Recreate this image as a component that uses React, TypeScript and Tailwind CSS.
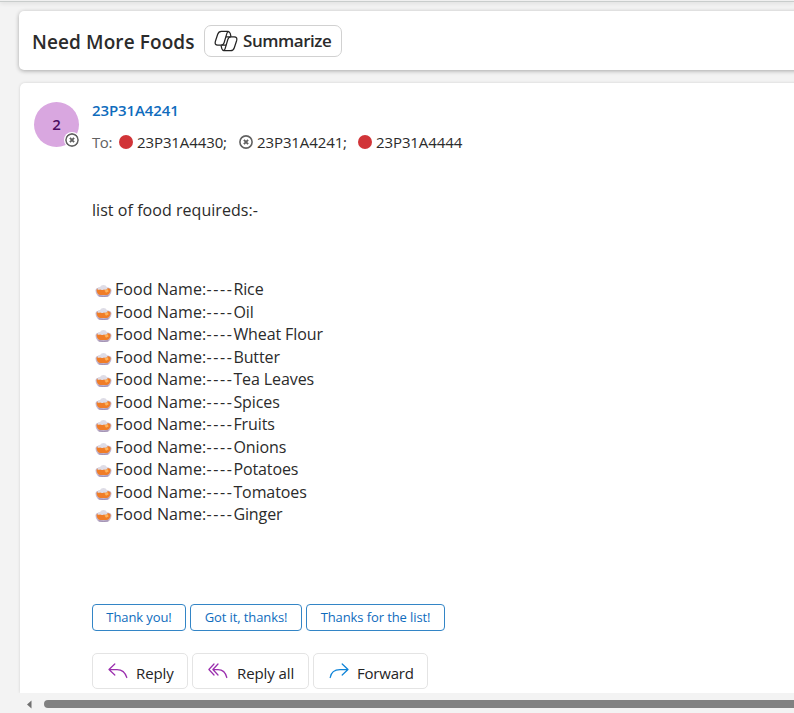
import React from "react";

const foods = ["Rice", "Oil", "Wheat Flour", "Butter", "Tea Leaves", "Spices", "Fruits", "Onions", "Potatoes", "Tomatoes", "Ginger"];

function Offline({ className }: { className: string }) {
  return (
    <svg className={className} viewBox="0 0 14 14" fill="none" stroke="#616161">
      <circle cx="7" cy="7" r="6.1" strokeWidth="1.6" fill="white" />
      <path d="M4.9 4.9l4.2 4.2M9.1 4.9L4.9 9.1" strokeWidth="1.9" />
    </svg>
  );
}

function CopilotIcon() {
  return (
    <svg className="ml-[9px] h-[22px] w-[24px] shrink-0" viewBox="0 0 24 22" fill="none" stroke="#242424" strokeWidth="1.25" strokeLinejoin="round">
      <path d="M17 6.6 16.2 3.4C15.8 2 14.9 1.3 13.6 1.3H7.4C5.3 1.3 4.3 2.4 3.7 4.3L1.4 11.2C.6 13.8 1.5 15.2 3.8 15.2H7.3C8.8 15.2 9.6 14.3 10.1 12.7L12.8 3.6C13.2 2.1 13.7 1.3 14.8 1.5" />
      <path d="M7 15.4 7.8 18.6C8.2 20 9.1 20.7 10.4 20.7H16.6C18.7 20.7 19.7 19.6 20.3 17.7L22.6 10.8C23.4 8.2 22.5 6.8 20.2 6.8H16.7C15.2 6.8 14.4 7.7 13.9 9.3L11.2 18.4C10.8 19.9 10.3 20.7 9.2 20.5" />
      <path d="M11.8 6.8H16.7M7.3 15.2H12.2" />
    </svg>
  );
}

function Pie() {
  return (
    <svg className="mr-[3px] h-[14px] w-[17px] shrink-0 translate-y-[2px]" viewBox="0 0 17 14">
      <path d="M.5 6.5Q.5 4 4 3.4H13Q16.5 4 16.5 6.5Q16.5 9.5 14.6 11.4Q13 13 11 13H6Q4 13 2.4 11.4Q.5 9.5 .5 6.5Z" fill="#c5b8cf" />
      <path d="M1.6 6.3Q1.8 4.2 5 4H12Q15.4 4.2 15.6 6.3Q15.6 8.6 14 10Q13 10.9 11.5 10.9H5.5Q4 10.9 3 10Q1.6 8.6 1.6 6.3Z" fill="#f07d28" />
      <path d="M9.5 6.4 12.8 5.2 13.6 7.6 11 8.8Z" fill="#ffb259" />
      <path d="M2.4 5.4Q2.8 3.5 5 3Q6 1 8.5 1T12 3.2Q13 4.3 12 5.2Q10.5 6 9 5.4Q7 6.6 5 5.6Q3.5 6.2 2.4 5.4Z" fill="#dedce6" />
      <path d="M3.6 11.8Q8.5 13 13.4 11.8" stroke="#9a8aae" strokeWidth="1" fill="none" />
    </svg>
  );
}

function Arrow({ kind }: { kind: "reply" | "all" | "forward" }) {
  return (
    <svg className="h-[16px] w-[20px] shrink-0" viewBox="0 0 20 16" fill="none" stroke={kind === "forward" ? "#0f84d8" : "#9b2fae"} strokeWidth="1.25" strokeLinecap="round" strokeLinejoin="round">
      {kind === "reply" && <path d="M6.8 1 1 6.5 6.8 12M1.3 6.5H9Q16.5 6.5 18.8 14.5" />}
      {kind === "all" && <path d="M6 1 .9 6.5 6 12M10 1 4.9 6.5 10 12M5.2 6.5H10Q17 6.5 18.8 14.5" />}
      {kind === "forward" && <path d="M13.2 1 19 6.5 13.2 12M18.7 6.5H11Q2.5 6.5 1.2 14.5" />}
    </svg>
  );
}

export default function App() {
  return (
    <div className="flex h-[713px] w-[794px] flex-col overflow-hidden bg-[#f3f3f3] font-['Open_Sans',sans-serif] text-[#2b2b2b]">
      <div className="h-[2px] shrink-0 border-b border-[#c9cdcc] bg-[#f0f0f0] shadow-[0_1px_4px_#00000025]" />
      <header className="mt-[9px] ml-[19px] flex h-[59px] w-[790px] shrink-0 items-center rounded-[5px] bg-white pl-[13px] shadow-[0_1px_4px_#00000050]">
        <h1 className="w-[163px] shrink-0 pt-[3px] whitespace-nowrap text-[19px] font-semibold tracking-[0.1px]"><span>Need More Foods</span></h1>
        <button className="ml-[9px] flex h-[32px] w-[138px] items-center rounded-[7px] border border-[#d1d1d1] whitespace-nowrap">
          <CopilotIcon />
          <span className="ml-[5px] text-[17px] font-semibold tracking-[-0.45px]">Summarize</span>
        </button>
      </header>
      <main className="mt-[13px] ml-[20px] flex h-[610px] w-[790px] shrink-0 flex-col overflow-hidden rounded-t-[5px] bg-white shadow-[0_0_3px_#00000025]">
        <div className="mt-[19px] ml-[14px] flex h-[52px] items-start">
          <div className="relative flex size-[45px] items-center justify-center rounded-full bg-[#d9a7e0] text-[15px] font-semibold text-[#4c0d62]">
            2
            <Offline className="absolute -right-[1px] -bottom-[1px] size-[16px] rounded-full bg-white p-[1px]" />
          </div>
          <div className="ml-[13px] text-[15px] whitespace-nowrap">
            <div className="-mt-px h-[18px] leading-[18px] font-semibold tracking-[-0.1px] text-[#0f6cbd]"><span>23P31A4241</span></div>
            <div className="mt-[12px] flex h-[22px] items-center tracking-[-0.1px]">
              <span className="w-[27px] tracking-[-0.4px] text-[#616161]">To:</span>
              <i className="mr-[4px] size-[14px] rounded-full bg-[#d13438]" />
              <span className="w-[102px]">23P31A4430;</span>
              <Offline className="mr-[4px] size-[14px]" />
              <span className="w-[101px]">23P31A4241;</span>
              <i className="mr-[4px] size-[14px] rounded-full bg-[#d13438]" />
              <span>23P31A4444</span>
            </div>
          </div>
        </div>
        <div className="mt-[44px] ml-[72px] text-[16px] leading-[24px] tracking-[0.05px]"><span>list of food requireds:-</span></div>
        <ul className="mt-[56px] ml-[75px] h-[248px] text-[16px]">
          {foods.map((food) => (
            <li key={food} className="flex h-[22.5px] items-center whitespace-nowrap">
              <Pie />
              <span className="tracking-[-0.1px]"><span className="tracking-[0.1px]">Food Name:</span><span className="tracking-[1.6px]">----</span>{food}</span>
            </li>
          ))}
        </ul>
        <div className="mt-[78px] ml-[72px] flex h-[27px] shrink-0 gap-[4px] text-[13px] tracking-[-0.1px] whitespace-nowrap text-[#0f6cbd]">
          <button className="h-[27px] w-[94px] rounded-[4px] border border-[#3385c6]"><span>Thank you!</span></button>
          <button className="h-[27px] w-[112px] rounded-[4px] border border-[#3385c6]"><span>Got it, thanks!</span></button>
          <button className="h-[27px] w-[139px] rounded-[4px] border border-[#3385c6]"><span>Thanks for the list!</span></button>
        </div>
        <div className="mt-[22px] ml-[72px] flex h-[36px] shrink-0 gap-[4px] text-[15px] tracking-[-0.1px] whitespace-nowrap text-[#242424]">
          <button className="flex h-[36px] w-[96px] items-center rounded-[5px] border border-[#e4e4e4] pl-[15px]"><Arrow kind="reply" /><span className="ml-[8px] pt-[4px]">Reply</span></button>
          <button className="flex h-[36px] w-[117px] items-center rounded-[5px] border border-[#e4e4e4] pl-[15px]"><Arrow kind="all" /><span className="ml-[9px] pt-[4px]">Reply all</span></button>
          <button className="flex h-[36px] w-[115px] items-center rounded-[5px] border border-[#e4e4e4] pl-[15px]"><Arrow kind="forward" /><span className="ml-[8px] pt-[4px] tracking-[-0.2px]">Forward</span></button>
        </div>
      </main>
      <div className="flex h-[20px] shrink-0 items-center bg-[#f3f3f3] pt-[2px] pl-[27px]">
        <svg className="h-[9px] w-[5px] shrink-0" viewBox="0 0 5 9"><path d="M4.5.5V8.5L0 4.5Z" fill="#707070" /></svg>
        <div className="ml-[12px] h-[8px] w-[800px] shrink-0 rounded-full bg-[#818181]" />
      </div>
    </div>
  );
}
